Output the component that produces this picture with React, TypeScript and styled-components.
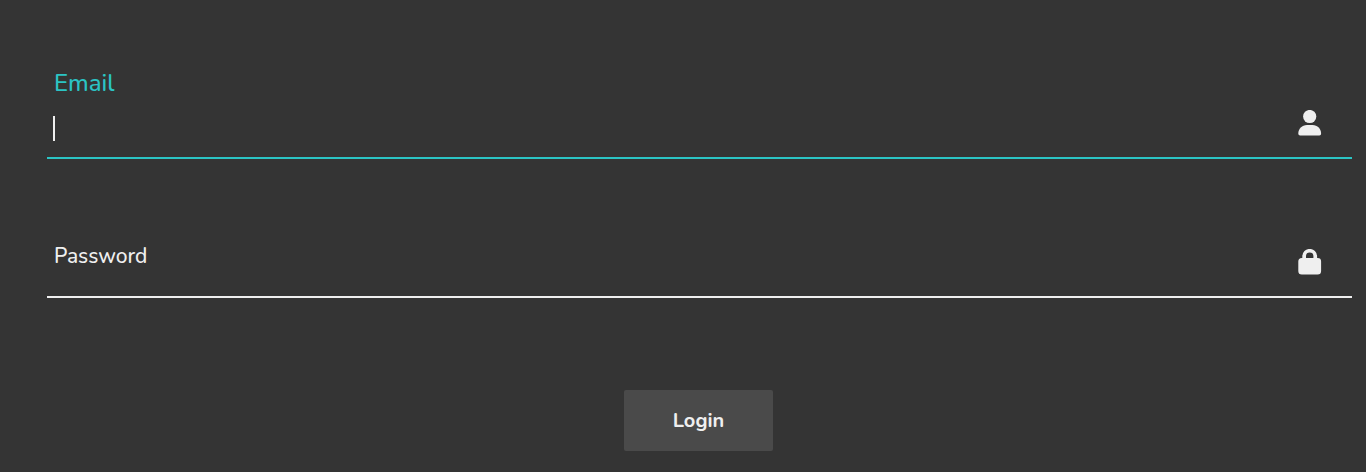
import React, { useState } from "react";
import styled, { createGlobalStyle } from "styled-components";

const GlobalStyle = createGlobalStyle`
  *, *::before, *::after { box-sizing: border-box; }
  body {
    margin: 0;
    background: #343434;
    color: #efefef;
    font-family: Nunito, "Noto Sans", "Open Sans", sans-serif;
  }
`;

const Form = styled.form`
  display: flex;
  flex-direction: column;
  padding: 69px 14px 21px 47px;
`;

const Field = styled.div<{ $active: boolean }>`
  display: grid;
  grid-template-columns: minmax(0, 1fr) auto;
  grid-template-rows: 28px 60px;
  margin-bottom: 49px;
  border-bottom: 2px solid ${(p) => (p.$active ? "#2bc4c4" : "#efefef")};
`;

const Label = styled.label<{ $raised: boolean; $active: boolean }>`
  grid-column: 1;
  grid-row: ${(p) => (p.$raised ? 1 : 2)};
  align-self: start;
  justify-self: start;
  padding: ${(p) => (p.$raised ? "0 7px" : "6px 7px")};
  color: ${(p) => (p.$active ? "#2bc4c4" : "#efefef")};
  font-size: ${(p) => (p.$raised ? 24 : 21)}px;
  font-weight: 500;
  line-height: 28px;
  pointer-events: none;
`;

const Input = styled.input<{ $filled: boolean }>`
  grid-column: 1;
  grid-row: 2;
  width: 100%;
  height: 60px;
  padding: 0 7px;
  border: 0;
  outline: 0;
  background: transparent;
  color: #efefef;
  caret-color: ${(p) => (p.$filled ? "#efefef" : "transparent")};
  font: inherit;
  font-size: 21px;
`;

const Caret = styled.span`
  grid-column: 1;
  grid-row: 2;
  width: 2px;
  height: 25px;
  margin: 19px 0 0 6px;
  background: #efefef;
  pointer-events: none;
`;

const Icon = styled.svg`
  grid-column: 2;
  grid-row: 2;
  width: 24px;
  height: 26px;
  margin: 13px 30px 0 8px;
  fill: #efefef;
`;

const Button = styled.button`
  align-self: center;
  width: 149px;
  height: 61px;
  margin: 43px 2px 0 0;
  border: 0;
  border-radius: 2px;
  background: #4a4a4a;
  color: #efefef;
  font: inherit;
  font-size: 20px;
  font-weight: 700;
  line-height: 28px;
`;

const UserIcon = () => (
  <Icon viewBox="0 0 24 26" aria-hidden="true">
    <circle cx="11.7" cy="6.5" r="6.6" />
    <path d="M9 15h5.500c5 0 8.600 3.600 8.600 8.600 0 1.200-.7 1.900-1.800 1.900H2.100C1 25.500 .3 24.800 .3 23.600 .3 18.600 4 15 9 15z" />
  </Icon>
);

const LockIcon = () => (
  <Icon viewBox="0 0 24 26" aria-hidden="true">
    <path
      fillRule="evenodd"
      d="M4.300 9V7.300a7.400 7.400 0 0 1 14.800 0V9h.5a3.500 3.500 0 0 1 3.500 3.500V22a3.500 3.500 0 0 1-3.500 3.500H3.800A3.500 3.500 0 0 1 .3 22v-9.500A3.500 3.500 0 0 1 3.800 9zM8 9h7.400V7.300a3.700 3.700 0 0 0-7.400 0z"
    />
  </Icon>
);

type FieldProps = {
  id: string;
  label: string;
  type: string;
  value: string;
  active: boolean;
  onChange: (value: string) => void;
  onFocus: () => void;
  children: React.ReactNode;
};

function TextField({ id, label, type, value, active, onChange, onFocus, children }: FieldProps) {
  return (
    <Field $active={active}>
      <Label htmlFor={id} $raised={active || value !== ""} $active={active}>
        {label}
      </Label>
      <Input
        id={id}
        type={type}
        value={value}
        $filled={value !== ""}
        onFocus={onFocus}
        onChange={(e) => onChange(e.target.value)}
      />
      {active && value === "" && <Caret />}
      {children}
    </Field>
  );
}

export default function App() {
  const [active, setActive] = useState("email");
  const [email, setEmail] = useState("");
  const [password, setPassword] = useState("");

  return (
    <>
      <GlobalStyle />
      <Form onSubmit={(e) => e.preventDefault()}>
        <TextField
          id="email"
          label="Email"
          type="email"
          value={email}
          active={active === "email"}
          onChange={setEmail}
          onFocus={() => setActive("email")}
        >
          <UserIcon />
        </TextField>
        <TextField
          id="password"
          label="Password"
          type="password"
          value={password}
          active={active === "password"}
          onChange={setPassword}
          onFocus={() => setActive("password")}
        >
          <LockIcon />
        </TextField>
        <Button type="submit">Login</Button>
      </Form>
    </>
  );
}
